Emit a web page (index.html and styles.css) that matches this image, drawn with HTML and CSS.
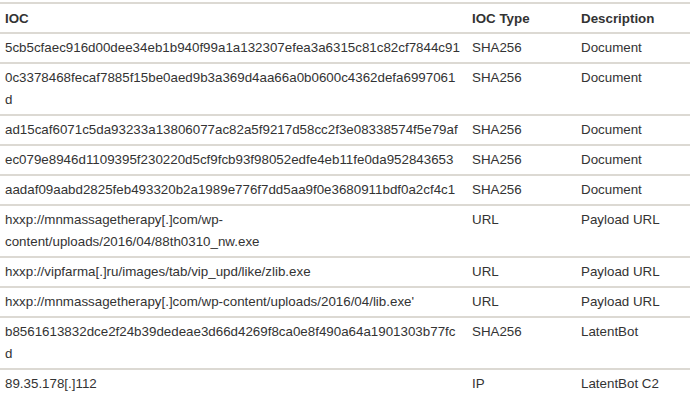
FILE: index.html
```html
<!DOCTYPE html>
<html>
<head>
<meta charset="utf-8">
<link rel="stylesheet" href="styles.css">
</head>
<body>
<table class="ioc-table">
  <colgroup>
    <col class="col-ioc">
    <col class="col-type">
    <col class="col-desc">
  </colgroup>
  <thead>
    <tr><th>IOC</th><th>IOC Type</th><th>Description</th></tr>
  </thead>
  <tbody>
    <tr><td>5cb5cfaec916d00dee34eb1b940f99a1a132307efea3a6315c81c82cf7844c91</td><td>SHA256</td><td>Document</td></tr>
    <tr><td>0c3378468fecaf7885f15be0aed9b3a369d4aa66a0b0600c4362defa6997061d</td><td>SHA256</td><td>Document</td></tr>
    <tr><td>ad15caf6071c5da93233a13806077ac82a5f9217d58cc2f3e08338574f5e79af</td><td>SHA256</td><td>Document</td></tr>
    <tr><td>ec079e8946d1109395f230220d5cf9fcb93f98052edfe4eb11fe0da952843653</td><td>SHA256</td><td>Document</td></tr>
    <tr><td>aadaf09aabd2825feb493320b2a1989e776f7dd5aa9f0e3680911bdf0a2cf4c1</td><td>SHA256</td><td>Document</td></tr>
    <tr><td>hxxp://mnmassagetherapy[.]com/wp-content/uploads/2016/04/88th0310_nw.exe</td><td>URL</td><td>Payload URL</td></tr>
    <tr><td>hxxp://vipfarma[.]ru/images/tab/vip_upd/like/zlib.exe</td><td>URL</td><td>Payload URL</td></tr>
    <tr><td>hxxp://mnmassagetherapy[.]com/wp-content/uploads/2016/04/lib.exe'</td><td>URL</td><td>Payload URL</td></tr>
    <tr><td>b8561613832dce2f24b39dedeae3d66d4269f8ca0e8f490a64a1901303b77fcd</td><td>SHA256</td><td>LatentBot</td></tr>
    <tr><td>89.35.178[.]112</td><td>IP</td><td>LatentBot C2</td></tr>
  </tbody>
</table>
</body>
</html>
```
FILE: styles.css
```css
html, body {
  margin: 0;
  padding: 0;
  background: #ffffff;
}
body {
  padding-top: 2px;
  font-family: "Liberation Sans", Arial, sans-serif;
  font-size: 13.35px;
  color: #333333;
}
.ioc-table {
  width: 690px;
  border-collapse: collapse;
  table-layout: fixed;
}
.col-ioc { width: 467px; }
.col-type { width: 109px; }
.col-desc { width: 114px; }
.ioc-table th,
.ioc-table td {
  text-align: left;
  vertical-align: top;
  padding: 3px 5px 3px 5px;
  line-height: 22px;
  border-top: 2px solid #dcd9d3;
  overflow-wrap: anywhere;
}
.ioc-table th {
  font-weight: bold;
  padding-top: 4px;
  padding-bottom: 2px;
}
```
